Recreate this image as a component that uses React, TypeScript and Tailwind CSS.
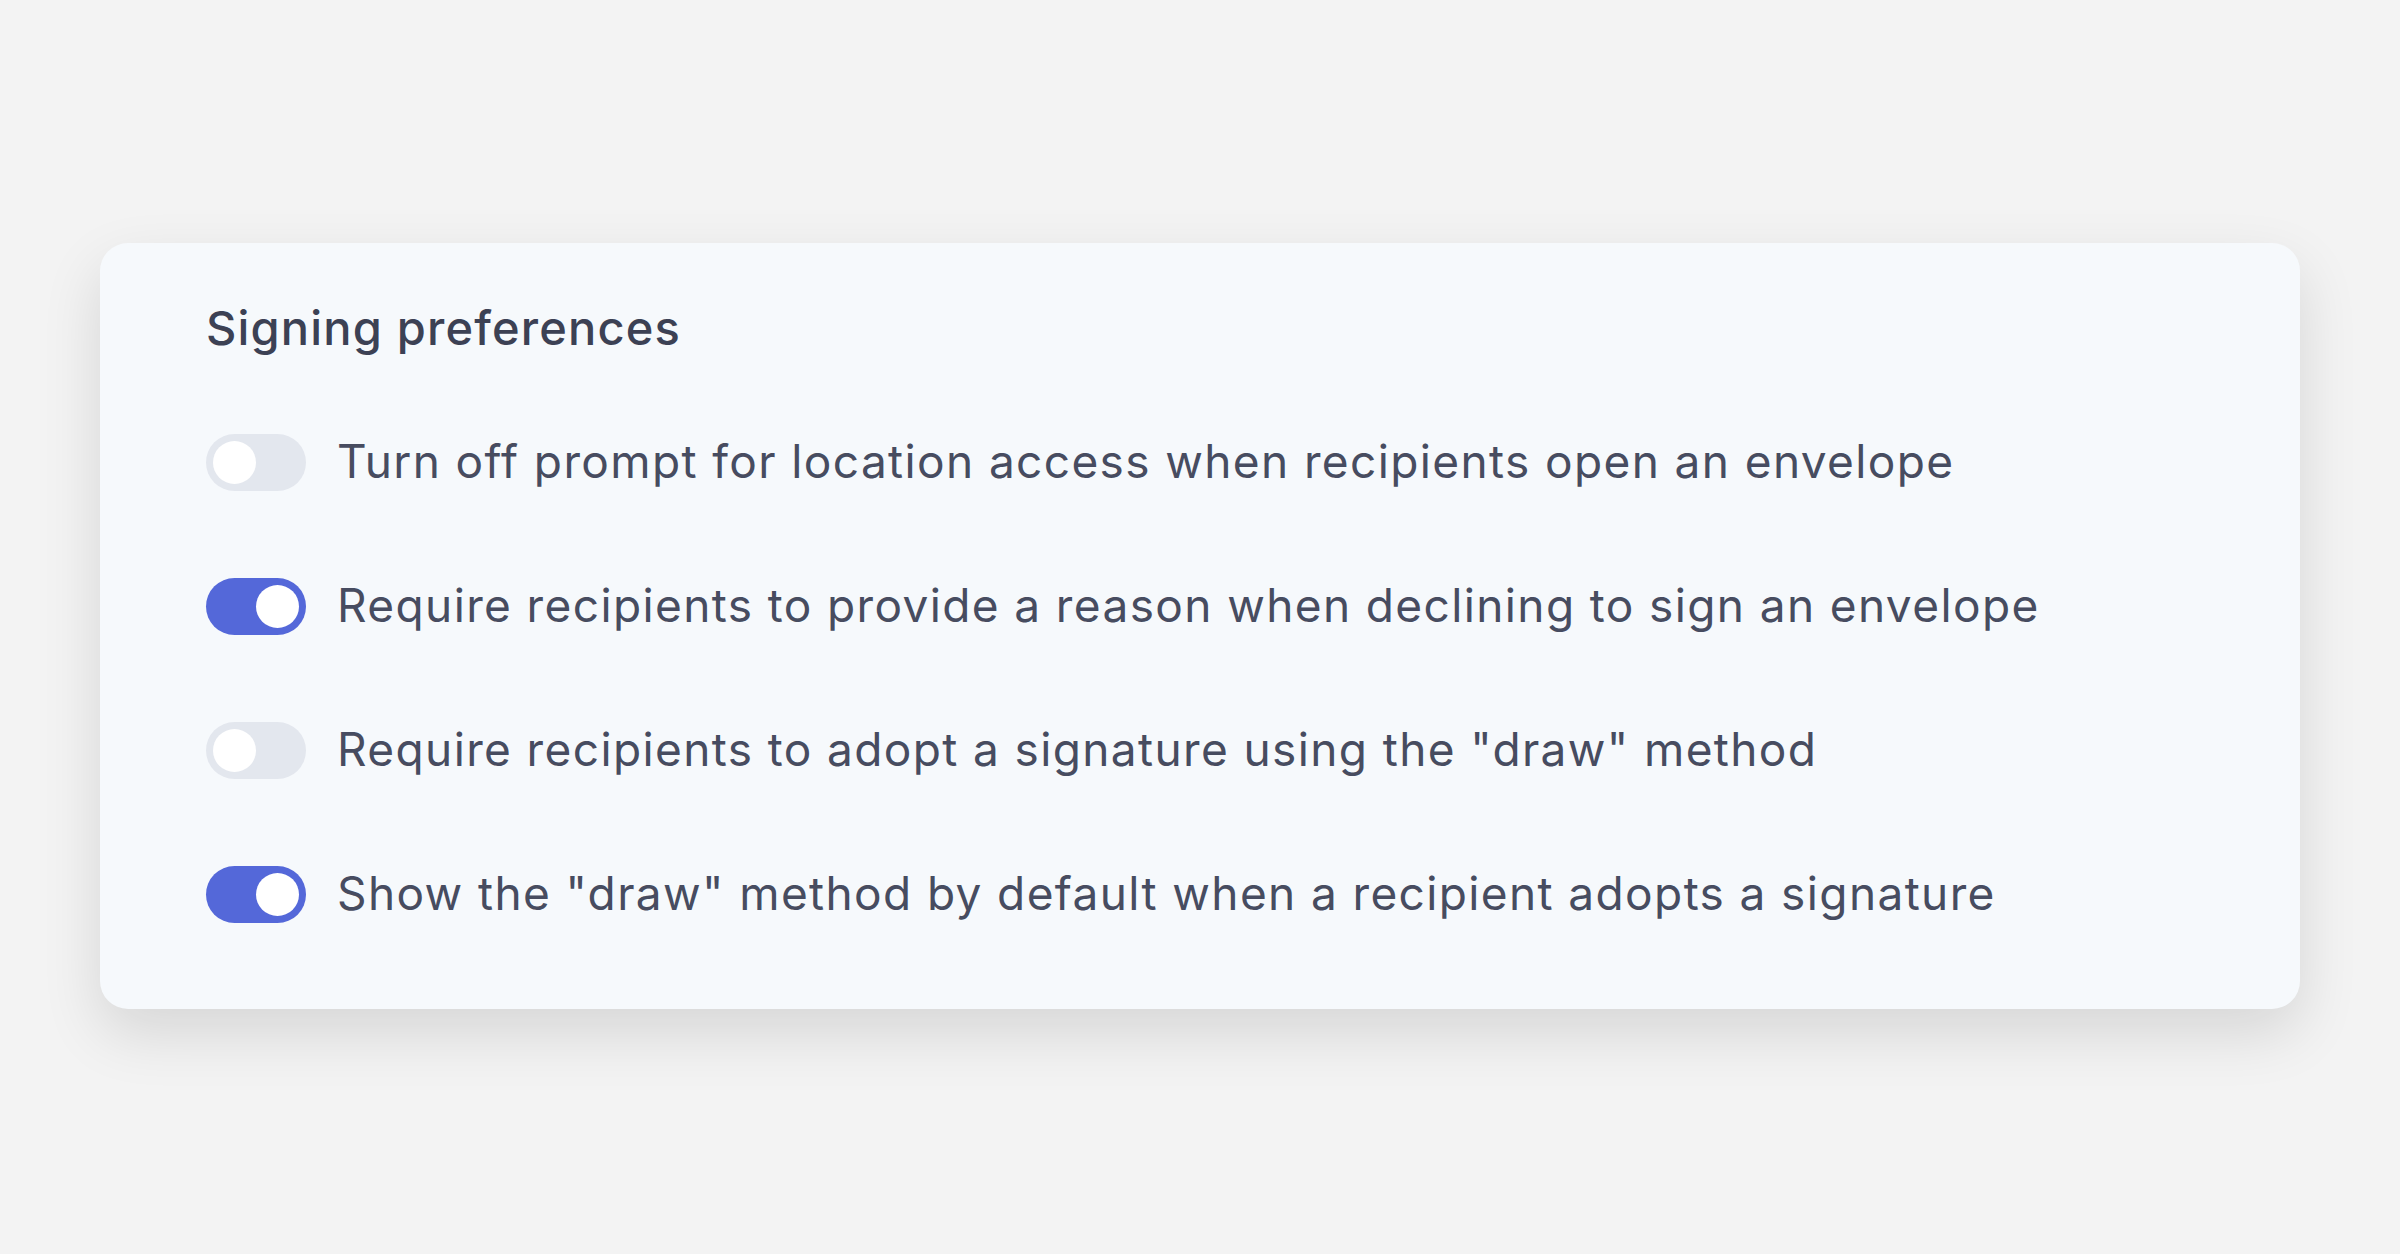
import { useState } from 'react';

const prefs = [
    { id: 'location', label: 'Turn off prompt for location access when recipients open an envelope', on: false },
    { id: 'decline', label: 'Require recipients to provide a reason when declining to sign an envelope', on: true },
    { id: 'drawOnly', label: 'Require recipients to adopt a signature using the "draw" method', on: false },
    { id: 'drawDefault', label: 'Show the "draw" method by default when a recipient adopts a signature', on: true },
];

function Toggle({ on, onClick }: { on: boolean; onClick: () => void }) {
    return (
        <button
            type="button"
            onClick={onClick}
            className={`flex h-[57px] w-[100px] shrink-0 items-center rounded-full px-[7px] ${on ? 'justify-end bg-[#5468d9]' : 'justify-start bg-[#e3e7ee]'}`}
        >
            <span className="h-[43px] w-[43px] rounded-full bg-white" />
        </button>
    );
}

export default function App() {
    const [values, setValues] = useState<Record<string, boolean>>(
        Object.fromEntries(prefs.map((p) => [p.id, p.on]))
    );

    return (
        <div className="min-h-[1254px] bg-[#f3f3f3] px-[100px] pt-[243px]" style={{ fontFamily: 'Inter, "Liberation Sans", sans-serif' }}>
            <div className="w-[2200px] rounded-[28px] bg-[#f6f9fc] pb-[86px] pl-[106px] pr-10 pt-[57px] shadow-[0_24px_60px_rgba(0,0,0,0.12)]">
                <h2 className="text-[47px] font-medium leading-[56px] tracking-[0.025em] text-[#3c4154]">Signing preferences</h2>
                <div className="mt-[78px] flex flex-col gap-[87px]">
                    {prefs.map((p) => (
                        <label key={p.id} className="flex items-center gap-[31px]">
                            <Toggle on={values[p.id]} onClick={() => setValues((v) => ({ ...v, [p.id]: !v[p.id] }))} />
                            <span className="-mt-[3px] text-[46px] leading-[56px] tracking-[0.03em] text-[#474c60]">{p.label}</span>
                        </label>
                    ))}
                </div>
            </div>
        </div>
    );
}
